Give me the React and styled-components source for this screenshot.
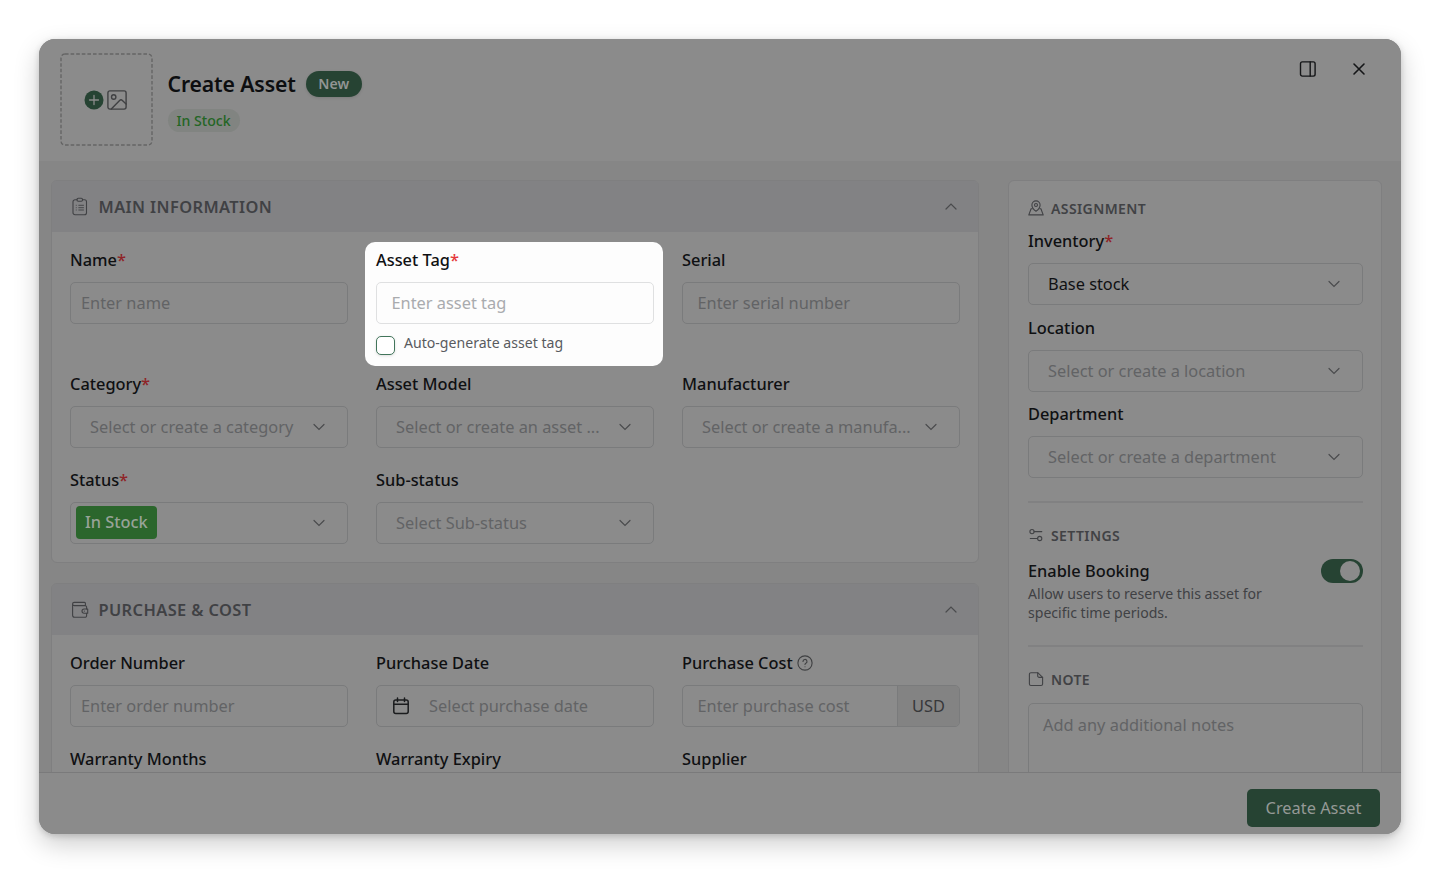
import React from 'react'
import styled, { createGlobalStyle } from 'styled-components'

const GlobalStyle = createGlobalStyle`
  * {
    box-sizing: border-box;
  }

  body {
    margin: 0;
    background-color: #fff;
    font-family: "Noto Sans", "Open Sans", sans-serif;
    font-size: 16.36px;
    color: #111214;
    overflow: hidden;
  }
`

const StyledPage = styled.div`
  height: 873px;
  padding: 39px;
`

const StyledModal = styled.div`
  display: flex;
  flex-direction: column;
  width: 1362px;
  height: 795px;
  border-radius: 16px;
  overflow: hidden;
  background-color: #868686;
  box-shadow: 0 10px 26px rgba(0, 0, 0, 0.2), 0 2px 6px rgba(0, 0, 0, 0.16);
`

const StyledHeader = styled.header`
  display: flex;
  flex: none;
  height: 122px;
  padding: 14px 31px 0 21px;
  background-color: #8b8b8b;
`

const StyledImageDrop = styled.div`
  display: flex;
  align-items: center;
  justify-content: center;
  gap: 3px;
  width: 93px;
  height: 93px;
  padding-right: 2px;
  color: #404143;

  rect.outline {
    stroke: #656565;
  }
`

const StyledDashes = styled.svg`
  position: absolute;
  margin-left: 2px;
`

const StyledHeading = styled.div`
  flex: 1;
  padding: 17px 0 0 14.5px;
`

const StyledTitleRow = styled.div`
  display: flex;
  align-items: center;
  gap: 10px;
  height: 27px;
`

const StyledTitle = styled.h1`
  margin: 0;
  font-size: 21.2px;
  font-weight: 600;
  letter-spacing: -0.12px;
  line-height: 27px;
  color: #0d0e10;
`

const StyledNewBadge = styled.span`
  height: 26px;
  padding: 0 12.5px;
  border-radius: 13px;
  background-color: #264333;
  color: #929593;
  font-size: 14.1px;
  font-weight: 600;
  line-height: 26px;
  box-shadow: 0 1px 3px rgba(0, 0, 0, 0.12);
`

const StyledStatusPill = styled.span`
  display: inline-block;
  height: 23px;
  margin-top: 12px;
  padding: 0 9px;
  border-radius: 12px;
  background-color: #818481;
  color: #246625;
  font-size: 14.1px;
  font-weight: 500;
  line-height: 23px;
`

const StyledHeaderActions = styled.div`
  display: flex;
  align-items: center;
  gap: 31px;
  height: 32px;
  color: #151618;
`

const StyledBody = styled.main`
  display: flex;
  flex: 1;
  min-height: 0;
  align-items: flex-start;
  gap: 29px;
  padding: 19px 19px 0 12px;
  overflow: hidden;
`

const StyledColumn = styled.div`
  display: flex;
  flex-direction: column;
  gap: 20px;
  width: 928px;
`

const StyledCard = styled.section`
  border: 1px solid #7f7f80;
  border-radius: 6px;
  background-color: #8b8b8b;
`

const StyledCardHeader = styled.div`
  display: flex;
  align-items: center;
  height: 51px;
  padding: 0 21.5px 0 18px;
  border-radius: 5px 5px 0 0;
  background-color: #828284;
  color: #404144;
`

const StyledCardTitle = styled.h2`
  flex: 1;
  margin: 0 0 0 8.500px;
  font-size: 16.4px;
  font-weight: 600;
  letter-spacing: 0.4px;
  line-height: 24px;
`

const StyledGrid = styled.div`
  display: grid;
  grid-template-columns: repeat(3, 278px);
  gap: 20px 28px;
  padding: 15.5px 18px 18.5px;
`

const StyledField = styled.div`
  padding-bottom: ${props => props.$spaced ? '28px' : '0'};
`

const StyledHighlight = styled.div`
  width: 298px;
  height: 124px;
  margin: -6px -9px -14px -11px;
  padding: 6px 9px 0 11px;
  border-radius: 10px;
  background-color: #fdfdfd;
`

const StyledLabel = styled.div`
  display: flex;
  align-items: center;
  gap: 4px;
  height: 24px;
  margin-bottom: 10px;
  font-weight: 500;
  color: #0f1012;
`

const StyledRequired = styled.span`
  color: ${props => props.$lit ? '#e5383b' : '#8f2427'};
`

const StyledControl = styled.div`
  display: flex;
  align-items: center;
  height: 42px;
  padding: 0 ${props => props.$select ? 22 : 10}px 0 ${props => props.$indent || 10}px;
  border: 1px solid ${props => props.$lit ? '#dfe0e1' : '#7a7b7c'};
  border-radius: 5px;
  color: ${props => props.$filled ? '#101113' : props.$lit ? '#a9abae' : '#626365'};
`

const StyledText = styled.span`
  flex: 1;
  min-width: 0;
  white-space: nowrap;
`

const StyledChevron = styled.svg`
  flex: none;
  color: #4a4b4d;
`

const StyledTag = styled.span`
  height: 33px;
  margin-right: auto;
  padding: 0 9px;
  border-radius: 4px;
  background-color: #2b662c;
  color: #98a398;
  font-weight: 500;
  line-height: 33px;
`

const StyledCheckRow = styled.div`
  display: flex;
  gap: 9px;
  padding-top: 12.5px;
`

const StyledCheckbox = styled.span`
  width: 19px;
  height: 19px;
  border: 1.5px solid #42755b;
  border-radius: 5px;
  background-color: #fff;
  box-shadow: 0 1px 3px rgba(0, 0, 0, 0.12);
`

const StyledCheckText = styled.span`
  margin-top: -3px;
  font-size: 14.1px;
  line-height: 20px;
  color: #595b5f;
`

const StyledCostControl = styled(StyledControl)`
  padding-right: 0;
  overflow: hidden;
`

const StyledCurrency = styled.span`
  width: 62px;
  height: 40px;
  border-left: 1px solid #7a7b7c;
  background-color: #838383;
  color: #37383a;
  line-height: 40px;
  text-align: center;
`

const StyledDateControl = styled(StyledControl)`
  gap: 19px;
`

const StyledSide = styled(StyledCard)`
  width: 374px;
  height: 700px;
  padding: 17px 18.5px 0 19px;
`

const StyledSideTitle = styled.h3`
  display: flex;
  align-items: center;
  gap: 7px;
  height: 20px;
  margin: 0;
  font-size: 14px;
  font-weight: 600;
  letter-spacing: 0.4px;
  color: #414245;
`

const StyledSideFields = styled.div`
  display: flex;
  flex-direction: column;
  gap: 10.6px;
  padding-top: 11px;
`

const StyledDivider = styled.div`
  height: 2px;
  margin: ${props => props.$top}px 0 22px;
  background-color: #818182;
`

const StyledSetting = styled.div`
  display: flex;
  justify-content: space-between;
  padding-top: 14px;
`

const StyledSettingName = styled.div`
  height: 24px;
  font-weight: 500;
  line-height: 24px;
`

const StyledSettingHint = styled.div`
  width: 250px;
  margin-top: 1px;
  font-size: 14.08px;
  line-height: 19px;
  color: #404144;
`

const StyledSwitch = styled.div`
  display: flex;
  justify-content: flex-end;
  width: 42px;
  height: 24px;
  padding: 2px 3px;
  border-radius: 12px;
  background-color: #264333;
`

const StyledKnob = styled.span`
  width: 20px;
  height: 20px;
  border-radius: 50%;
  background-color: #8b8b8b;
`

const StyledNotes = styled.div`
  height: 120px;
  margin-top: 14px;
  padding: 9px 14px;
  border: 1px solid #7a7b7c;
  border-radius: 5px;
  line-height: 24px;
  color: #626365;
`

const StyledFooter = styled.footer`
  display: flex;
  flex: none;
  justify-content: flex-end;
  height: 62px;
  padding: 16px 21px 0 0;
  border-top: 1px solid #7a7a7b;
  background-color: #8b8b8b;
`

const StyledButton = styled.button`
  width: 133px;
  height: 38px;
  padding: 0;
  border: none;
  border-radius: 5px;
  background-color: #264333;
  color: #959996;
  font: inherit;
`

const Svg = ({ size = 16, box = 16, children, ...rest }) => (
  <svg
    width={size}
    height={size}
    viewBox={`0 0 ${box} ${box}`}
    fill="none"
    stroke="currentColor"
    strokeWidth="1.1"
    strokeLinecap="round"
    strokeLinejoin="round"
    {...rest}
  >
    {children}
  </svg>
)

const ClipboardIcon = () => (
  <Svg size={20} box={20}>
    <path d="M7 2.700H5a2 2 0 0 0-2 2v11a2 2 0 0 0 2 2h9.500a2 2 0 0 0 2-2v-11a2 2 0 0 0-2-2h-2" />
    <rect x="7" y="1.300" width="5.500" height="3" rx="1.200" />
    <path d="M6.200 8.300h.1M6.200 13h.1M8.800 8.300h4.700M8.800 13h4.700M6.200 10.700h.1M8.800 10.700h4.700" strokeWidth="0.9" />
  </Svg>
)

const WalletIcon = () => (
  <Svg size={20} box={20}>
    <path d="M2.600 3.800v11.500a2 2 0 0 0 2 2h10.500a1.500 1.500 0 0 0 1.500-1.500v-2.600M16.600 9V7.100a1.500 1.500 0 0 0-1.500-1.500H4.200a1.600 1.600 0 0 1 0-3.200h10.300a.9.900 0 0 1 .9.900v2.300" />
    <path d="M17.700 9v4.200h-3.600a2.100 2.100 0 0 1 0-4.200z" />
    <path d="M14.300 11.100h.1" />
  </Svg>
)

const PinIcon = () => (
  <Svg>
    <path d="M8 11.300S3.900 8.300 3.900 5a4.100 4.100 0 0 1 8.200 0c0 3.300-4.100 6.300-4.100 6.300z" />
    <circle cx="8" cy="5" r="1.500" />
    <path d="M4.200 8.800H3.100L.8 14.900h14.400l-2.300-6.100h-1.100" />
  </Svg>
)

const SlidersIcon = () => (
  <Svg>
    <circle cx="4" cy="4.600" r="2.100" />
    <path d="M6.100 4.600h7.700M2.300 11.500h7.300" />
    <circle cx="11.700" cy="11.500" r="2.100" />
  </Svg>
)

const NoteIcon = () => (
  <Svg>
    <path d="M9.700 1.700H3a1.600 1.600 0 0 0-1.600 1.600v9.600A1.600 1.600 0 0 0 3 14.500h10a1.600 1.600 0 0 0 1.600-1.600V6.400z" />
    <path d="M9.700 1.700v3.200a1.500 1.500 0 0 0 1.500 1.500h3.400" />
  </Svg>
)

const CalendarIcon = () => (
  <Svg size={18} box={18} strokeWidth="1.5" stroke="#1b1c1e">
    <rect x="1.800" y="3" width="14.400" height="13.500" rx="2" />
    <path d="M1.800 7.300h14.400M5.500 1v3.600M12.500 1v3.600" />
  </Svg>
)

const HelpIcon = () => (
  <Svg stroke="#3f4042">
    <circle cx="8" cy="8" r="7.100" />
    <path d="M6 6.400a2 2 0 1 1 2.900 1.800c-.6.300-.9.600-.9 1.300M8 11.700v.1" />
  </Svg>
)

const Chevron = ({ up }) => (
  <StyledChevron width="12" height="8" viewBox="0 0 12 8" fill="none" stroke="currentColor" strokeWidth="1.2" strokeLinecap="round">
    <path d={up ? 'M1 6l5-5 5 5' : 'M1 1.500l5 5 5-5'} />
  </StyledChevron>
)

const Label = ({ children, required, lit }) => (
  <StyledLabel>
    <span>{children}{required && <StyledRequired $lit={lit}>*</StyledRequired>}</span>
  </StyledLabel>
)

const InputField = ({ label, required, placeholder, indent, spaced }) => (
  <StyledField $spaced={spaced}>
    <Label required={required}>{label}</Label>
    <StyledControl $indent={indent}>
      <StyledText>{placeholder}</StyledText>
    </StyledControl>
  </StyledField>
)

const SelectField = ({ label, required, placeholder, value, tag }) => (
  <StyledField>
    <Label required={required}>{label}</Label>
    <StyledControl $select $filled={!!value} $indent={tag ? 5 : 19}>
      {tag ? <StyledTag>{tag}</StyledTag> : <StyledText>{value || placeholder}</StyledText>}
      <Chevron />
    </StyledControl>
  </StyledField>
)

const CardHeader = ({ icon, children }) => (
  <StyledCardHeader>
    {icon}
    <StyledCardTitle>{children}</StyledCardTitle>
    <Chevron up />
  </StyledCardHeader>
)

const Header = () => (
  <StyledHeader>
    <StyledImageDrop>
      <StyledDashes width="93" height="93" fill="none">
        <rect className="outline" x="1" y="1" width="91" height="91" rx="4" strokeWidth="1.4" strokeDasharray="3.600 2" />
      </StyledDashes>
      <Svg size={20} box={20} stroke="#8b8b8b" strokeWidth="1.3">
        <circle cx="10" cy="10" r="9.500" fill="#264333" stroke="none" />
        <path d="M10 5.500v9M5.500 10h9" />
      </Svg>
      <Svg size={20} box={20} strokeWidth="1.4">
        <rect x="0.900" y="0.900" width="18.200" height="18.200" rx="2" />
        <circle cx="6.700" cy="7" r="2.200" />
        <path d="M4.300 19l8.300-8.600a2 2 0 0 1 2.800 0l3.700 3.500" />
      </Svg>
    </StyledImageDrop>
    <StyledHeading>
      <StyledTitleRow>
        <StyledTitle>Create Asset</StyledTitle>
        <StyledNewBadge>New</StyledNewBadge>
      </StyledTitleRow>
      <StyledStatusPill>In Stock</StyledStatusPill>
    </StyledHeading>
    <StyledHeaderActions>
      <Svg size={18} box={18} strokeWidth="1.4">
        <rect x="1.500" y="1.900" width="14.600" height="14.200" rx="1.800" />
        <path d="M11.200 1.900v14.200" />
      </Svg>
      <Svg size={22} box={22} strokeWidth="1.6">
        <path d="M6 6l10 10M16 6L6 16" />
      </Svg>
    </StyledHeaderActions>
  </StyledHeader>
)

const MainInformation = () => (
  <StyledCard>
    <CardHeader icon={<ClipboardIcon />}>MAIN INFORMATION</CardHeader>
    <StyledGrid>
      <InputField label="Name" required placeholder="Enter name" spaced />
      <StyledHighlight>
        <Label required lit>Asset Tag</Label>
        <StyledControl $lit $indent={14.5}>
          <StyledText>Enter asset tag</StyledText>
        </StyledControl>
        <StyledCheckRow>
          <StyledCheckbox />
          <StyledCheckText>Auto-generate asset tag</StyledCheckText>
        </StyledCheckRow>
      </StyledHighlight>
      <InputField label="Serial" placeholder="Enter serial number" indent={14.5} spaced />
      <SelectField label="Category" required placeholder="Select or create a category" />
      <SelectField label="Asset Model" placeholder="Select or create an asset ..." />
      <SelectField label="Manufacturer" placeholder="Select or create a manufa..." />
      <SelectField label="Status" required tag="In Stock" />
      <SelectField label="Sub-status" placeholder="Select Sub-status" />
    </StyledGrid>
  </StyledCard>
)

const PurchaseCost = () => (
  <StyledCard>
    <CardHeader icon={<WalletIcon />}>PURCHASE &amp; COST</CardHeader>
    <StyledGrid>
      <InputField label="Order Number" placeholder="Enter order number" />
      <StyledField>
        <Label>Purchase Date</Label>
        <StyledDateControl $indent={15}>
          <CalendarIcon />
          <StyledText>Select purchase date</StyledText>
        </StyledDateControl>
      </StyledField>
      <StyledField>
        <StyledLabel>Purchase Cost <HelpIcon /></StyledLabel>
        <StyledCostControl $indent={14.5}>
          <StyledText>Enter purchase cost</StyledText>
          <StyledCurrency>USD</StyledCurrency>
        </StyledCostControl>
      </StyledField>
      <InputField label="Warranty Months" />
      <InputField label="Warranty Expiry" />
      <InputField label="Supplier" />
    </StyledGrid>
  </StyledCard>
)

const Sidebar = () => (
  <StyledSide>
    <StyledSideTitle><PinIcon />ASSIGNMENT</StyledSideTitle>
    <StyledSideFields>
      <SelectField label="Inventory" required value="Base stock" />
      <SelectField label="Location" placeholder="Select or create a location" />
      <SelectField label="Department" placeholder="Select or create a department" />
    </StyledSideFields>
    <StyledDivider $top={23} />
    <StyledSideTitle><SlidersIcon />SETTINGS</StyledSideTitle>
    <StyledSetting>
      <div>
        <StyledSettingName>Enable Booking</StyledSettingName>
        <StyledSettingHint>Allow users to reserve this asset for specific time periods.</StyledSettingHint>
      </div>
      <StyledSwitch><StyledKnob /></StyledSwitch>
    </StyledSetting>
    <StyledDivider $top={23} />
    <StyledSideTitle><NoteIcon />NOTE</StyledSideTitle>
    <StyledNotes>Add any additional notes</StyledNotes>
  </StyledSide>
)

const App = () => (
  <>
    <GlobalStyle />
    <StyledPage>
      <StyledModal>
        <Header />
        <StyledBody>
          <StyledColumn>
            <MainInformation />
            <PurchaseCost />
          </StyledColumn>
          <Sidebar />
        </StyledBody>
        <StyledFooter>
          <StyledButton>Create Asset</StyledButton>
        </StyledFooter>
      </StyledModal>
    </StyledPage>
  </>
)

export default App
